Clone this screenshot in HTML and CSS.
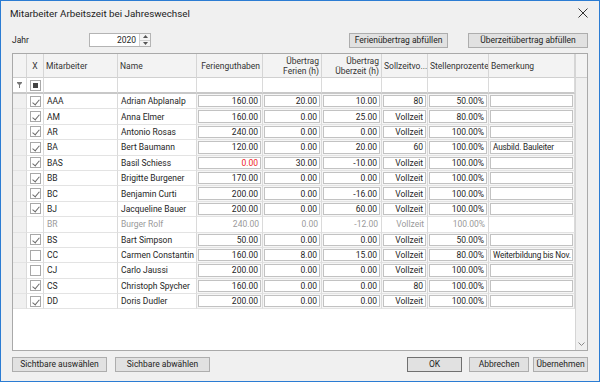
FILE: index.html
```html
<!DOCTYPE html>
<html lang="de">
<head>
    <meta charset="UTF-8">
    <meta name="viewport" content="width=device-width, initial-scale=1.0">
    <title>Mitarbeiter Arbeitszeit bei Jahreswechsel</title>
    <link rel="stylesheet" href="styles.css">
</head>
<body>
    <div class="window">
        <div class="titlebar">
            <span class="title">Mitarbeiter Arbeitszeit bei Jahreswechsel</span>
            <svg class="close" width="10" height="10" viewBox="0 0 10 10">
                <path d="M0.5 0.5 L9.5 9.5 M9.5 0.5 L0.5 9.5" stroke="#333" stroke-width="1" fill="none"/>
            </svg>
        </div>

        <div class="toolbar">
            <label class="year-label">Jahr</label>
            <div class="spin">
                <span class="spin-value">2020</span>
                <div class="spin-buttons">
                    <span class="spin-btn"><svg width="5" height="3" viewBox="0 0 5 3"><path d="M0 3 L2.5 0 L5 3 Z" fill="#555"/></svg></span>
                    <span class="spin-btn"><svg width="5" height="3" viewBox="0 0 5 3"><path d="M0 0 L2.5 3 L5 0 Z" fill="#555"/></svg></span>
                </div>
            </div>
            <div class="toolbar-actions">
                <button class="btn btn-ferien">Ferienübertrag abfüllen</button>
                <button class="btn btn-ueberzeit">Überzeitübertrag abfüllen</button>
            </div>
        </div>

        <div class="grid">
            <div class="grid-body">
                <div class="row header">
                    <div class="cell"></div>
                    <div class="cell center">X</div>
                    <div class="cell">Mitarbeiter</div>
                    <div class="cell">Name</div>
                    <div class="cell right">Ferienguthaben</div>
                    <div class="cell right">Übertrag<br>Ferien (h)</div>
                    <div class="cell right">Übertrag<br>Überzeit (h)</div>
                    <div class="cell">Sollzeitvo...</div>
                    <div class="cell">Stellenprozente</div>
                    <div class="cell">Bemerkung</div>
                </div>
                <div class="row filter">
                    <div class="cell indicator">
                        <svg width="5" height="6" viewBox="0 0 5 6"><path d="M0 0 H5 V1 L3 3 V6 H2 V3 L0 1 Z" fill="#777"/></svg>
                    </div>
                    <div class="cell center"><span class="check indeterminate"></span></div>
                    <div class="cell"></div>
                    <div class="cell"></div>
                    <div class="cell"></div>
                    <div class="cell"></div>
                    <div class="cell"></div>
                    <div class="cell"></div>
                    <div class="cell"></div>
                    <div class="cell"></div>
                </div>
                <div id="rows"></div>
            </div>
            <div class="scrollbar">
                <div class="scroll-head"></div>
                <div class="scroll-track">
                    <svg width="7" height="4" viewBox="0 0 7 4"><path d="M0.5 0.5 L3.5 3.5 L6.5 0.5" stroke="#888" fill="none"/></svg>
                </div>
            </div>
        </div>

        <div class="footer">
            <button class="btn btn-select">Sichtbare auswählen</button>
            <button class="btn btn-select">Sichbare abwählen</button>
            <div class="footer-spacer"></div>
            <button class="btn btn-default btn-ok">OK</button>
            <button class="btn btn-cancel">Abbrechen</button>
            <button class="btn btn-apply">Übernehmen</button>
        </div>
    </div>

    <script>
        // kuerzel, name, ferien, uebertrag ferien, uebertrag ueberzeit, sollzeit, stellen, bemerkung, status
        const mitarbeiter = [
            ["AAA", "Adrian Abplanalp", "160.00", "20.00", "10.00", "80", "50.00%", "", "on"],
            ["AM", "Anna Elmer", "160.00", "0.00", "25.00", "Vollzeit", "80.00%", "", "on"],
            ["AR", "Antonio Rosas", "240.00", "0.00", "0.00", "Vollzeit", "100.00%", "", "on"],
            ["BA", "Bert Baumann", "120.00", "0.00", "20.00", "60", "100.00%", "Ausbild. Bauleiter", "on"],
            ["BAS", "Basil Schiess", "0.00", "30.00", "-10.00", "Vollzeit", "100.00%", "", "on"],
            ["BB", "Brigitte Burgener", "170.00", "0.00", "0.00", "Vollzeit", "100.00%", "", "on"],
            ["BC", "Benjamin Curti", "200.00", "0.00", "-16.00", "Vollzeit", "100.00%", "", "on"],
            ["BJ", "Jacqueline Bauer", "200.00", "0.00", "60.00", "Vollzeit", "100.00%", "", "on"],
            ["BR", "Burger Rolf", "240.00", "0.00", "-12.00", "Vollzeit", "100.00%", "", "inactive"],
            ["BS", "Bart Simpson", "50.00", "0.00", "0.00", "Vollzeit", "50.00%", "", "on"],
            ["CC", "Carmen Constantin", "160.00", "8.00", "15.00", "Vollzeit", "80.00%", "Weiterbildung bis Nov.", "off"],
            ["CJ", "Carlo Jaussi", "200.00", "0.00", "0.00", "Vollzeit", "100.00%", "", "off"],
            ["CS", "Christoph Spycher", "160.00", "0.00", "0.00", "80", "100.00%", "", "on"],
            ["DD", "Doris Dudler", "200.00", "0.00", "0.00", "Vollzeit", "100.00%", "", "on"]
        ];

        const container = document.getElementById("rows");

        mitarbeiter.forEach((m) => {
            const status = m[8];
            const row = document.createElement("div");
            row.className = "row data" + (status === "inactive" ? " inactive" : "");

            let html = '<div class="cell indicator"></div>';
            html += '<div class="cell center">' + (status === "inactive" ? "" : '<span class="check' + (status === "on" ? " checked" : "") + '"></span>') + '</div>';
            html += '<div class="cell">' + m[0] + '</div>';
            html += '<div class="cell">' + m[1] + '</div>';

            for (let i = 2; i <= 7; i++) {
                const align = i === 7 ? " note" : " right";
                const red = (i === 2 && m[i] === "0.00") ? " negative" : "";
                if (status === "inactive") {
                    html += '<div class="cell' + (i === 7 ? "" : align) + '">' + m[i] + '</div>';
                } else {
                    html += '<div class="cell edit"><span class="editor' + align + red + '">' + m[i] + '</span></div>';
                }
            }

            row.innerHTML = html;
            container.appendChild(row);
        });
    </script>
</body>
</html>
```

FILE: styles.css
```css
/* Basis */
body {
    margin: 0;
    background-color: #f0f0f0;
    color: #1e1e1e;
    font-family: Roboto, "Open Sans", sans-serif;
    font-size: 8.5px;
}

.window {
    width: 600px;
    height: 382px;
    box-sizing: border-box;
    border: 1px solid #2b7cd3;
    padding: 0 11px;
    display: flex;
    flex-direction: column;
}

/* Titelleiste */
.titlebar {
    height: 24px;
    display: flex;
    align-items: center;
    justify-content: space-between;
    margin-left: -2px;
}

.title {
    font-size: 9.8px;
    color: #222;
}

/* Werkzeugleiste */
.toolbar {
    margin-top: 8px;
    height: 15px;
    display: flex;
    align-items: flex-start;
}

.year-label {
    width: 77px;
    line-height: 14px;
}

.spin {
    width: 62px;
    height: 14px;
    box-sizing: border-box;
    border: 1px solid #b4b4b4;
    background-color: #fff;
    display: flex;
}

.spin-value {
    flex: 1;
    text-align: right;
    padding-right: 3px;
    line-height: 12px;
}

.spin-buttons {
    width: 10px;
    border-left: 1px solid #d0d0d0;
    display: flex;
    flex-direction: column;
}

.spin-btn {
    flex: 1;
    display: flex;
    align-items: center;
    justify-content: center;
    background-color: #f4f4f4;
}

.spin-btn + .spin-btn {
    border-top: 1px solid #d0d0d0;
}

.toolbar-actions {
    margin-left: auto;
    display: flex;
    gap: 20px;
}

/* Buttons */
.btn {
    height: 15px;
    padding: 0;
    box-sizing: border-box;
    border: 1px solid #adadad;
    background-color: #e1e1e1;
    color: #1e1e1e;
    font-family: inherit;
    font-size: 8.5px;
    line-height: 13px;
    white-space: nowrap;
}

.btn-ferien { width: 99px; }
.btn-ueberzeit { width: 120px; }

.btn-default {
    border-color: #707070;
}

/* Tabelle */
.grid {
    margin-top: 5px;
    height: 298px;
    box-sizing: border-box;
    border: 1px solid #a9a9a9;
    background-color: #fff;
    display: flex;
}

.grid-body {
    width: 562px;
}

.row {
    display: grid;
    grid-template-columns: 14px 17px 74px 79px 66px 59px 60px 46px 61px 86px;
}

.cell {
    box-sizing: border-box;
    border-right: 1px solid #dadada;
    border-bottom: 1px solid #e3e3e3;
    padding: 0 3px;
    display: flex;
    align-items: center;
    white-space: nowrap;
    overflow: hidden;
}

.cell.center { justify-content: center; padding: 0; }
.cell.right { justify-content: flex-end; text-align: right; }

.header .cell {
    height: 24px;
    background-color: #f3f3f3;
    border-right-color: #d5d5d5;
    border-bottom-color: #d0d0d0;
    color: #333;
    line-height: 10px;
    padding: 0 2px;
}

.filter .cell {
    height: 16px;
    border-bottom: 2px solid #c8c8c8;
}

.filter .indicator {
    justify-content: center;
    padding: 0;
}

.data .cell {
    height: 15.4px;
}

.data .indicator {
    background-color: #f0f0f0;
}

.cell.edit {
    padding: 1px 1px;
    background-color: #f6f6f6;
}

.editor {
    flex: 1;
    min-width: 0;
    height: 100%;
    box-sizing: border-box;
    border: 1px solid #c2c2c2;
    background-color: #fff;
    padding: 0 2px;
    display: flex;
    align-items: center;
    overflow: hidden;
}

.editor.right { justify-content: flex-end; }

.editor.note {
    padding: 0 0 0 2px;
    font-size: 8.2px;
    letter-spacing: -0.15px;
}

.negative { color: #ee1c25; }

.inactive .cell { color: #9a9a9a; }

/* Checkboxen */
.check {
    width: 11px;
    height: 11px;
    box-sizing: border-box;
    border: 1px solid #a8a8a8;
    background-color: #fff;
    position: relative;
}

.check.checked::after {
    content: "";
    position: absolute;
    left: 3px;
    top: 1px;
    width: 3px;
    height: 6px;
    border: solid #6a6a6a;
    border-width: 0 1px 1px 0;
    transform: rotate(40deg);
}

.check.indeterminate::after {
    content: "";
    position: absolute;
    left: 2px;
    top: 2px;
    width: 5px;
    height: 5px;
    background-color: #444;
}

/* Scrollbar */
.scrollbar {
    width: 12px;
    border-left: 1px solid #d5d5d5;
    background-color: #f0f0f0;
    display: flex;
    flex-direction: column;
}

.scroll-head {
    height: 24px;
    box-sizing: border-box;
    border-bottom: 1px solid #d0d0d0;
    background-color: #f3f3f3;
}

.scroll-track {
    flex: 1;
    display: flex;
    align-items: flex-end;
    justify-content: center;
    padding-bottom: 4px;
}

/* Fusszeile */
.footer {
    margin-top: 6px;
    display: flex;
    gap: 7px;
}

.btn-select { width: 95px; }
.btn-select + .btn-select { margin-left: 1px; }

.footer-spacer { flex: 1; }

.btn-ok { width: 55px; }
.btn-cancel { width: 60px; }
.btn-apply { width: 55px; margin-left: -3px; }
```
